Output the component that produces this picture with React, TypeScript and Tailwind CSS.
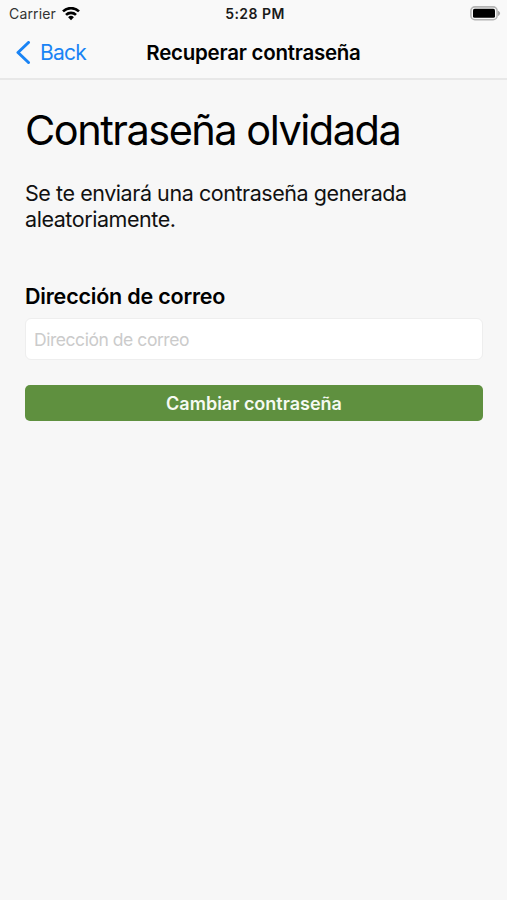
import { useState } from 'react';

function WifiIcon() {
    return (
        <svg width="18" height="14" viewBox="0 0 18 14" fill="none" stroke="#000" strokeWidth="2.6">
            <path d="M1 4.4a11.4 11.4 0 0 1 16 0" />
            <path d="M4 7.9a7.1 7.1 0 0 1 10 0" />
            <path d="M9 13.2 6.1 10.3a4.1 4.1 0 0 1 5.8 0Z" fill="#000" stroke="none" />
        </svg>
    );
}

function BatteryIcon() {
    return (
        <svg width="31" height="15" viewBox="0 0 31 15">
            <rect x="0.9" y="0.9" width="26.2" height="12.8" rx="4" fill="none" stroke="#b4b4b4" strokeWidth="1.6" />
            <rect x="3" y="2.8" width="22" height="9" rx="1.6" fill="#000" />
            <path d="M28 4.7c2.8 1.2 2.8 4 0 5.2Z" fill="#a6a6a6" />
        </svg>
    );
}

function StatusBar() {
    return (
        <div className="grid h-[27px] grid-cols-[1fr_auto_1fr] items-center pl-[9px] pr-[6px] text-[14px]">
            <div className="flex items-center gap-1.5 text-[#333]">
                <span className="tracking-[0.15px]">Carrier</span>
                <WifiIcon />
            </div>
            <span className="font-semibold tracking-[0.45px] text-[#1a1a1a]">5:28 PM</span>
            <div className="flex justify-end">
                <BatteryIcon />
            </div>
        </div>
    );
}

function NavBar() {
    return (
        <header className="grid h-[53px] grid-cols-[1fr_auto_1fr] items-center border-b-2 border-[#e8e8e8] px-4">
            <button className="flex items-center gap-[9px] text-[21px] tracking-[-0.75px] text-[#1a84f5]">
                <svg width="15" height="24" viewBox="0 0 15 24" fill="none" stroke="currentColor" strokeWidth="3" strokeLinecap="round" strokeLinejoin="round">
                    <path d="M12.5 1.5 2 11.5l10.5 10" />
                </svg>
                Back
            </button>
            <h1 className="pt-0.5 text-[20.5px] font-semibold tracking-[-0.25px]">Recuperar contraseña</h1>
        </header>
    );
}

export default function App() {
    const [email, setEmail] = useState('');

    return (
        <div className="h-[900px] w-[507px] bg-[#f7f7f7] font-['Inter',sans-serif] text-black">
            <div className="bg-[#f9f9f9]">
                <StatusBar />
                <NavBar />
            </div>
            <main className="pl-[25px] pr-6 pt-6">
                <h2 className="text-[41.5px] leading-[52px] tracking-[-1.5px]">Contraseña olvidada</h2>
                <p className="mt-6 text-[21.5px] leading-[26px] tracking-[-0.44px] text-[#111]">
                    Se te enviará una contraseña generada
                    <br />
                    aleatoriamente.
                </p>
                <label htmlFor="email" className="mt-[50px] block text-[21.5px] font-semibold leading-7 tracking-[-0.2px]">
                    Dirección de correo
                </label>
                <input
                    id="email"
                    type="email"
                    value={email}
                    onChange={(e) => setEmail(e.target.value)}
                    placeholder="Dirección de correo"
                    className="mt-2 block h-[42px] w-full rounded-[6px] border border-[#eeeeee] bg-white px-2 text-[17.5px] tracking-[-0.45px] placeholder:text-[#cbcbcb]"
                />
                <button className="mt-[25px] h-9 w-full rounded-[5px] bg-[#5f903f] text-[18px] font-semibold text-[#f6faf2]">
                    Cambiar contraseña
                </button>
            </main>
        </div>
    );
}
